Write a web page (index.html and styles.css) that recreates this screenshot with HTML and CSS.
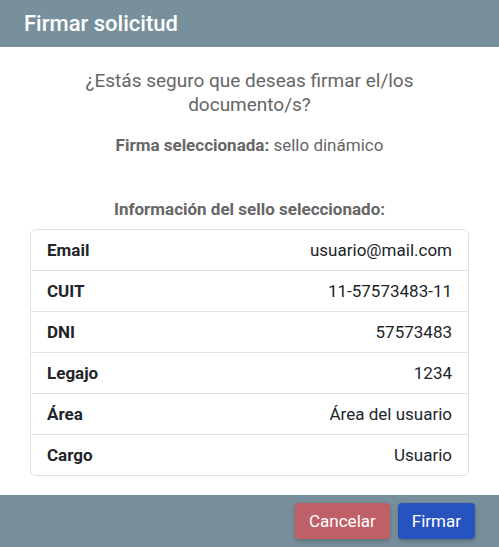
FILE: index.html
```html
<!DOCTYPE html>
<html lang="es">
<head>
    <meta charset="UTF-8">
    <meta name="viewport" content="width=device-width, initial-scale=1.0">
    <title>Firmar solicitud</title>
    <link rel="stylesheet" href="styles.css">
</head>
<body>
    <div class="modal">
        <div class="modal-header">
            <h2>Firmar solicitud</h2>
        </div>
        <div class="modal-body">
            <p class="question">¿Estás seguro que deseas firmar el/los documento/s?</p>
            <p class="selected"><b>Firma seleccionada:</b> sello dinámico</p>
            <p class="info-title">Información del sello seleccionado:</p>
            <ul class="info-list">
                <li><span class="label">Email</span><span>usuario@mail.com</span></li>
                <li><span class="label">CUIT</span><span>11-57573483-11</span></li>
                <li><span class="label">DNI</span><span>57573483</span></li>
                <li><span class="label">Legajo</span><span>1234</span></li>
                <li><span class="label">Área</span><span>Área del usuario</span></li>
                <li><span class="label">Cargo</span><span>Usuario</span></li>
            </ul>
        </div>
        <div class="modal-footer">
            <button class="btn btn-cancel">Cancelar</button>
            <button class="btn btn-sign">Firmar</button>
        </div>
    </div>
</body>
</html>
```

FILE: styles.css
```css
body {
    font-family: Roboto, "Noto Sans", sans-serif;
    margin: 0;
    background-color: #fff;
}
.modal {
    width: 499px;
    height: 547px;
    display: flex;
    flex-direction: column;
}
.modal-header {
    background-color: #78909c;
    height: 47px;
    padding: 0 24px;
    display: flex;
    align-items: center;
}
.modal-header h2 {
    margin: 0;
    color: #fff;
    font-size: 22px;
    font-weight: 500;
}
.modal-body {
    flex: 1;
    padding: 22px 30px 0;
    text-align: center;
}
.question {
    margin: 0 auto;
    width: 350px;
    font-size: 19px;
    line-height: 24px;
    color: #666;
}
.selected {
    margin: 16px 0 0;
    font-size: 17px;
    line-height: 24px;
    color: #666;
}
.selected b {
    font-weight: 700;
}
.info-title {
    margin: 40px 0 0;
    font-size: 17px;
    font-weight: 700;
    line-height: 24px;
    color: #666;
}
.info-list {
    list-style: none;
    margin: 8px 0 0;
    padding: 0;
    border: 1px solid #dee2e6;
    border-radius: 6px;
    text-align: left;
}
.info-list li {
    display: flex;
    justify-content: space-between;
    align-items: center;
    height: 40px;
    padding: 0 16px;
    font-size: 17px;
    color: #212529;
    border-bottom: 1px solid #dee2e6;
}
.info-list li:last-child {
    border-bottom: none;
}
.info-list .label {
    font-weight: 700;
}
.modal-footer {
    background-color: #78909c;
    height: 52px;
    padding: 0 24px;
    display: flex;
    justify-content: flex-end;
    align-items: center;
    gap: 8px;
}
.btn {
    font-family: Roboto, sans-serif;
    font-size: 17px;
    color: #fff;
    border: none;
    border-radius: 4px;
    height: 36px;
    padding: 0 14px;
    box-shadow: 0 2px 4px rgba(0, 0, 0, 0.25);
}
.btn-cancel {
    background-color: #bf5f67;
}
.btn-sign {
    background-color: #2653bd;
}
```
